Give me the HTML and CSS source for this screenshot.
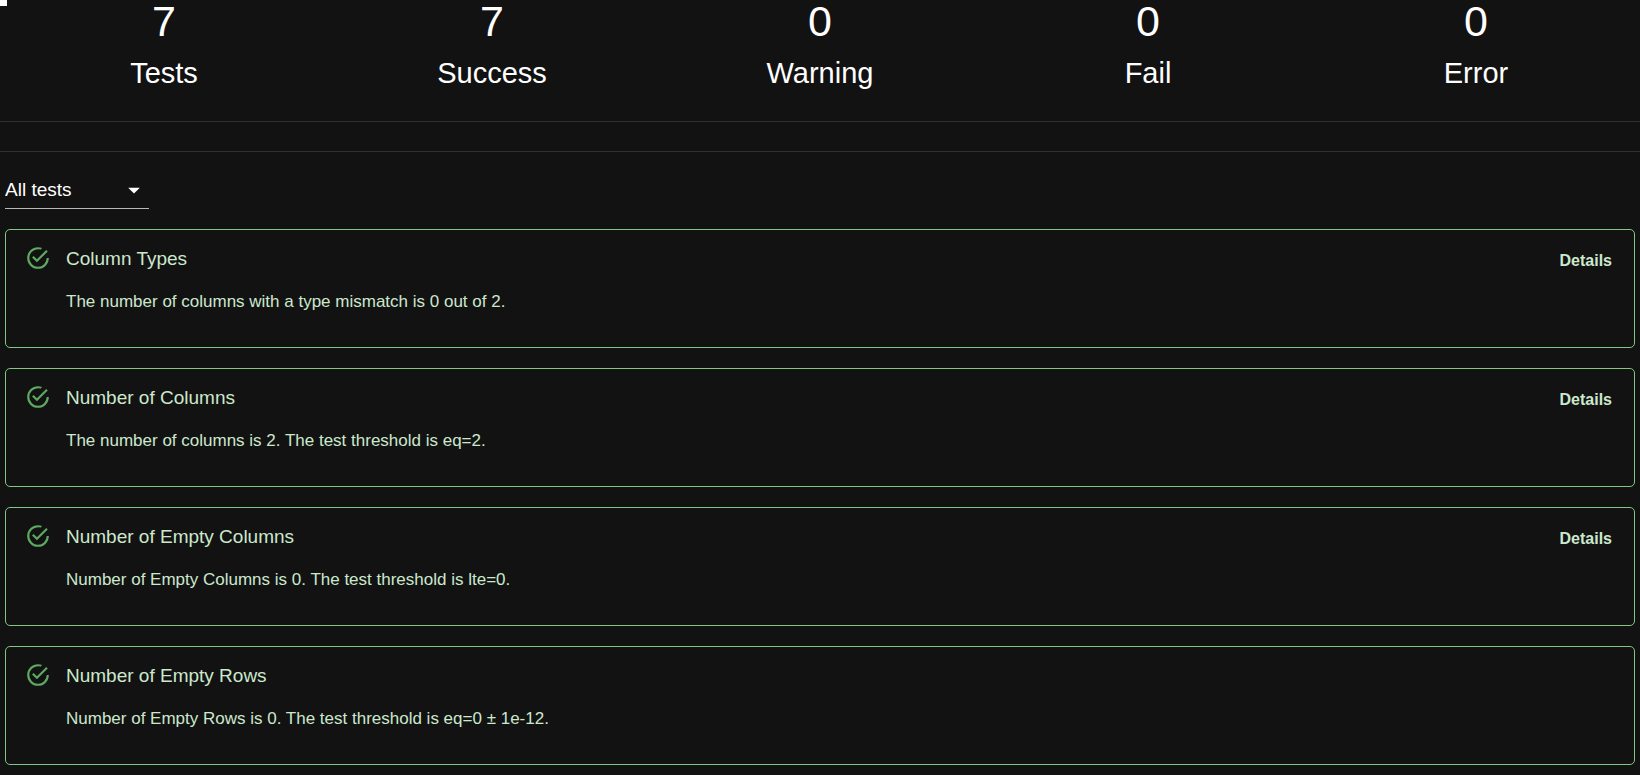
FILE: index.html
```html
<!DOCTYPE html>
<html lang="en">
<head>
<meta charset="utf-8">
<title>Test results</title>
<meta name="viewport" content="width=device-width, initial-scale=1">
<link rel="stylesheet" href="styles.css">
</head>
<body>
<svg class="defs" aria-hidden="true">
  <symbol id="check" viewBox="0 0 24 24"><path d="M20,12A8,8 0 0,1 12,20A8,8 0 0,1 4,12A8,8 0 0,1 12,4C12.76,4 13.5,4.11 14.2,4.31L15.77,2.74C14.61,2.26 13.34,2 12,2A10,10 0 0,0 2,12A10,10 0 0,0 12,22A10,10 0 0,0 22,12M7.91,10.08L6.5,11.5L11,16L21,6L19.59,4.58L11,13.17L7.91,10.08Z"/></symbol>
</svg>
<div class="corner"></div>
<section class="stats">
  <div class="stat"><div class="stat-value">7</div><div class="stat-label">Tests</div></div>
  <div class="stat"><div class="stat-value">7</div><div class="stat-label">Success</div></div>
  <div class="stat"><div class="stat-value">0</div><div class="stat-label">Warning</div></div>
  <div class="stat"><div class="stat-value">0</div><div class="stat-label">Fail</div></div>
  <div class="stat"><div class="stat-value">0</div><div class="stat-label">Error</div></div>
</section>
<div class="band"></div>
<main class="tests">
  <div class="filter">
    <select class="filter-select" aria-label="Filter tests"><option>All tests</option></select>
    <svg class="filter-arrow" viewBox="0 0 24 24" aria-hidden="true"><path d="M7 10l5 5 5-5z"/></svg>
  </div>
  <div class="cards">
    <article class="card">
      <svg class="card-icon" aria-hidden="true"><use href="#check"/></svg>
      <div class="card-text">
        <h2 class="card-title">Column Types</h2>
        <p class="card-desc">The number of columns with a type mismatch is 0 out of 2.</p>
      </div>
      <button class="details" type="button">Details</button>
    </article>
    <article class="card">
      <svg class="card-icon" aria-hidden="true"><use href="#check"/></svg>
      <div class="card-text">
        <h2 class="card-title">Number of Columns</h2>
        <p class="card-desc">The number of columns is 2. The test threshold is eq=2.</p>
      </div>
      <button class="details" type="button">Details</button>
    </article>
    <article class="card">
      <svg class="card-icon" aria-hidden="true"><use href="#check"/></svg>
      <div class="card-text">
        <h2 class="card-title">Number of Empty Columns</h2>
        <p class="card-desc">Number of Empty Columns is 0. The test threshold is lte=0.</p>
      </div>
      <button class="details" type="button">Details</button>
    </article>
    <article class="card">
      <svg class="card-icon" aria-hidden="true"><use href="#check"/></svg>
      <div class="card-text">
        <h2 class="card-title">Number of Empty Rows</h2>
        <p class="card-desc">Number of Empty Rows is 0. The test threshold is eq=0 ± 1e-12.</p>
      </div>
    </article>
  </div>
</main>
</body>
</html>
```
FILE: styles.css
```css
* { box-sizing: border-box; }

body {
  margin: 0;
  background: #121212;
  color: #fff;
  font-family: "Liberation Sans", Arial, sans-serif;
}

.defs { display: none; }

.corner {
  position: absolute;
  top: 0;
  left: 0;
  width: 7px;
  height: 6px;
  background: #fff;
}

.stats {
  display: grid;
  grid-template-columns: repeat(5, 1fr);
  padding-bottom: 28px;
  text-align: center;
}

.stat-value {
  font-size: 43px;
  line-height: 42px;
}

.stat-label {
  padding-top: 11px;
  font-size: 29px;
  line-height: 40px;
}

.band {
  height: 31px;
  border-top: 1px solid #2f2f2f;
  border-bottom: 1px solid #2f2f2f;
}

.tests { padding: 20px 5px 10px; }

.filter {
  display: grid;
  width: 144px;
  border-bottom: 1px solid #b8b8b8;
}

.filter-select,
.filter-arrow { grid-area: 1 / 1; }

.filter-select {
  appearance: none;
  width: 100%;
  height: 36px;
  margin: 0;
  padding: 0 0 2px;
  border: 0;
  background: transparent;
  color: #fff;
  font: 19px "Liberation Sans", Arial, sans-serif;
}

.filter-arrow {
  width: 28px;
  height: 28px;
  margin-right: 1px;
  place-self: center end;
  fill: #fff;
  pointer-events: none;
}

.cards {
  display: grid;
  gap: 20px;
  padding-top: 20px;
}

.card {
  display: flex;
  align-items: flex-start;
  gap: 15px;
  padding: 15px 22px 33px 19px;
  border: 1px solid #81c784;
  border-radius: 5px;
  color: #cce8cd;
}

.card-icon {
  flex: none;
  width: 26px;
  height: 26px;
  fill: #5eaa61;
}

.card-text { flex: 1; }

.card-title {
  margin: 0;
  font-size: 19px;
  font-weight: 400;
  line-height: 28px;
}

.card-desc {
  margin: 17px 0 0;
  font-size: 17px;
  line-height: 24px;
}

.details {
  padding: 0;
  border: 0;
  background: transparent;
  color: inherit;
  font: bold 16px/32px "Liberation Sans", Arial, sans-serif;
}
```
